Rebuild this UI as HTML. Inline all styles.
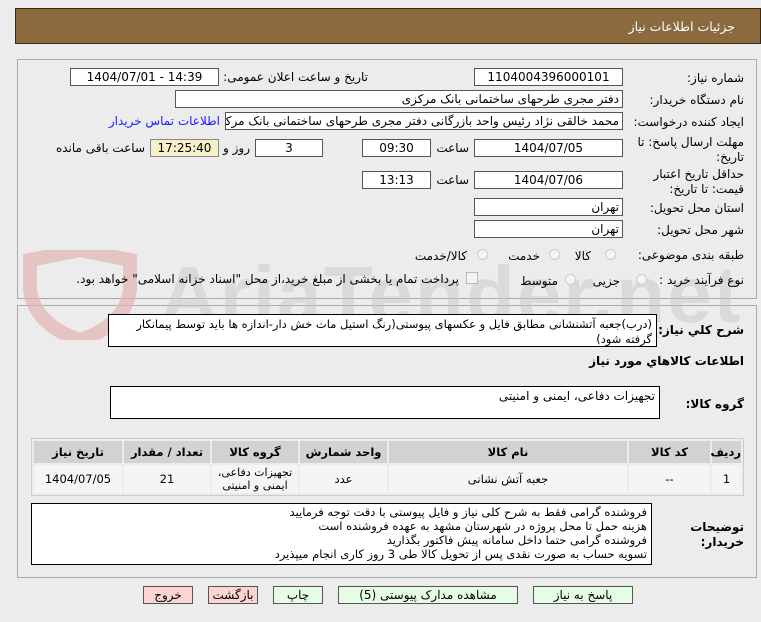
<!DOCTYPE html>
<html><head><meta charset="utf-8"><style>
*{margin:0;padding:0;box-sizing:border-box}
body{width:761px;height:622px;background:#ececec;font-family:"DejaVu Sans","Liberation Sans",sans-serif;font-size:12px;color:#000;position:relative;overflow:hidden}
.a{position:absolute}
.r{direction:rtl;white-space:nowrap}
.in{position:absolute;background:#fff;border:1px solid #555;text-align:center;line-height:16px;white-space:nowrap;overflow:hidden}
.tx{position:absolute;background:#fff;border:1px solid #000;direction:rtl;padding:2px 4px;line-height:15px}
.lab{position:absolute;direction:rtl;text-align:right;white-space:nowrap}
.rad{position:absolute;width:11px;height:11px;border-radius:50%;border:1px solid #ccc;background:#f4f4f4}
.btn{position:absolute;height:18px;border:1px solid #555;text-align:center;line-height:16px;font-size:12px}
table{border-collapse:separate;border-spacing:2px;table-layout:fixed}
td,th{text-align:center;font-size:11.5px}
th{background:#d2d2d2;height:22px;font-weight:bold}
td{background:#f5f5f5;height:28px}
</style></head><body>
<div class="a" style="left:15px;top:8px;width:746px;height:36px;background:#8b6a40;border:1px solid #3a2a10"></div>
<div class="a r" style="right:26px;top:19px;color:#fff;font-size:12.5px">جزئیات اطلاعات نیاز</div>

<div class="a" style="left:17px;top:59px;width:740px;height:240px;border:1px solid #aaa"></div>
<div class="a" style="left:17px;top:305px;width:740px;height:273px;border:1px solid #aaa"></div>

<!-- watermark -->
<svg class="a" style="left:20px;top:250px;opacity:.7" width="130" height="90"><path d="M10 10 L60 0 L110 10 L110 40 Q105 75 60 90 Q15 75 10 40 Z" fill="none" stroke="#e3b4b4" stroke-width="14"/></svg>
<div class="a" style="left:160px;top:255px;font-size:80px;font-weight:bold;color:#c9c9c9;opacity:.5;letter-spacing:2px;line-height:80px;font-family:'Liberation Sans',sans-serif">AriaTender.net</div>

<div class="lab" style="right:17px;top:71px">شماره نیاز:</div>
<div class="in" style="left:474px;top:68px;width:149px;height:18px">1104004396000101</div>
<div class="lab" style="right:393px;top:70px">تاریخ و ساعت اعلان عمومی:</div>
<div class="in" style="left:70px;top:68px;width:149px;height:18px">1404/07/01 - 14:39</div>

<div class="lab" style="right:17px;top:93px">نام دستگاه خریدار:</div>
<div class="in r" style="left:175px;top:90px;width:448px;height:18px;text-align:right;padding-right:3px">دفتر مجری طرحهای ساختمانی بانک مرکزی</div>

<div class="lab" style="right:17px;top:115px">ایجاد کننده درخواست:</div>
<div class="in r" style="left:225px;top:112px;width:398px;height:18px;text-align:right;padding-right:3px">محمد خالقی نژاد رئیس واحد بازرگانی دفتر مجری طرحهای ساختمانی بانک مرکزی</div>
<div class="lab" style="right:541px;top:114px;color:#1a1aff">اطلاعات تماس خریدار</div>

<div class="lab" style="right:17px;top:135px;line-height:15px">مهلت ارسال پاسخ: تا<br>تاریخ:</div>
<div class="in" style="left:474px;top:139px;width:149px;height:18px">1404/07/05</div>
<div class="lab" style="right:292px;top:141px">ساعت</div>
<div class="in" style="left:362px;top:139px;width:69px;height:18px">09:30</div>
<div class="in" style="left:255px;top:139px;width:68px;height:18px">3</div>
<div class="lab" style="right:511px;top:141px">روز و</div>
<div class="in" style="left:150px;top:139px;width:69px;height:18px;background:#f5f0c8;border-color:#888">17:25:40</div>
<div class="lab" style="right:616px;top:141px">ساعت باقی مانده</div>

<div class="lab" style="right:17px;top:167px;line-height:15px">حداقل تاریخ اعتبار<br>قیمت: تا تاریخ:</div>
<div class="in" style="left:474px;top:171px;width:149px;height:18px">1404/07/06</div>
<div class="lab" style="right:292px;top:173px">ساعت</div>
<div class="in" style="left:362px;top:171px;width:69px;height:18px">13:13</div>

<div class="lab" style="right:17px;top:201px">استان محل تحویل:</div>
<div class="in r" style="left:474px;top:198px;width:149px;height:18px;text-align:right;padding-right:3px">تهران</div>
<div class="lab" style="right:17px;top:223px">شهر محل تحویل:</div>
<div class="in r" style="left:474px;top:220px;width:149px;height:18px;text-align:right;padding-right:3px">تهران</div>

<div class="lab" style="right:17px;top:248px">طبقه بندی موضوعی:</div>
<div class="rad" style="left:605px;top:249px"></div><div class="lab" style="right:170px;top:249px">کالا</div>
<div class="rad" style="left:549px;top:249px"></div><div class="lab" style="right:221px;top:249px">خدمت</div>
<div class="rad" style="left:477px;top:249px"></div><div class="lab" style="right:294px;top:249px">کالا/خدمت</div>

<div class="lab" style="right:17px;top:273px">نوع فرآیند خرید :</div>
<div class="rad" style="left:636px;top:274px"></div><div class="lab" style="right:141px;top:274px">جزیی</div>
<div class="rad" style="left:565px;top:274px"></div><div class="lab" style="right:203px;top:274px">متوسط</div>
<div class="a" style="left:466px;top:272px;width:12px;height:12px;border:1px solid #bbb;background:#f4f4f4"></div>
<div class="lab" style="right:302px;top:272px">پرداخت تمام یا بخشی از مبلغ خرید،از محل "اسناد خزانه اسلامی" خواهد بود.</div>

<div class="lab" style="right:17px;top:323px;font-weight:bold">شرح كلي نياز:</div>
<div class="tx" style="left:108px;top:314px;width:549px;height:33px;font-size:11.5px">(درب)جعبه آتشنشانی مطابق فایل و عکسهای پیوستی(رنگ استیل مات خش دار-اندازه ها باید توسط پیمانکار گرفته شود)</div>
<div class="lab" style="right:17px;top:354px;font-weight:bold">اطلاعات كالاهاي مورد نياز</div>
<div class="lab" style="right:17px;top:397px;font-weight:bold">گروه کالا:</div>
<div class="tx" style="left:110px;top:386px;width:550px;height:33px">تجهیزات دفاعی، ایمنی و امنیتی</div>

<div class="a" style="left:31px;top:438px;width:713px;height:58px;border:1px solid #ccc;background:#ececec">
<table style="width:711px;direction:rtl"><tr>
<th style="width:29px">ردیف</th><th style="width:81px">کد کالا</th><th style="width:238px">نام کالا</th><th style="width:87px">واحد شمارش</th><th style="width:86px">گروه کالا</th><th style="width:86px">تعداد / مقدار</th><th>تاریخ نیاز</th></tr>
<tr><td>1</td><td>--</td><td>جعبه آتش نشانی</td><td>عدد</td><td style="font-size:11px;line-height:13px">تجهیزات دفاعی،<br>ایمنی و امنیتی</td><td>21</td><td>1404/07/05</td></tr></table></div>

<div class="lab" style="right:17px;top:520px;font-weight:bold;line-height:15px">توضیحات<br>خریدار:</div>
<div class="tx" style="left:31px;top:503px;width:621px;height:62px;line-height:14px;padding-top:1px;font-size:11.5px">فروشنده گرامی فقط به شرح کلی نیاز و فایل پیوستی با دقت توجه فرمایید<br>هزینه حمل تا محل پروژه در شهرستان مشهد به عهده فروشنده است<br>فروشنده گرامی حتما داخل سامانه پیش فاکتور بگذارید<br>تسویه حساب به صورت نقدی پس از تحویل کالا طی 3 روز کاری انجام میپذیرد</div>

<div class="btn" style="left:143px;top:586px;width:50px;background:#fcd4d4">خروج</div>
<div class="btn" style="left:208px;top:586px;width:50px;background:#fcd4d4">بازگشت</div>
<div class="btn" style="left:273px;top:586px;width:50px;background:#e4fde4">چاپ</div>
<div class="btn" style="left:338px;top:586px;width:180px;background:#e4fde4">مشاهده مدارک پیوستی (5)</div>
<div class="btn" style="left:533px;top:586px;width:100px;background:#e4fde4">پاسخ به نیاز</div>
</body></html>
